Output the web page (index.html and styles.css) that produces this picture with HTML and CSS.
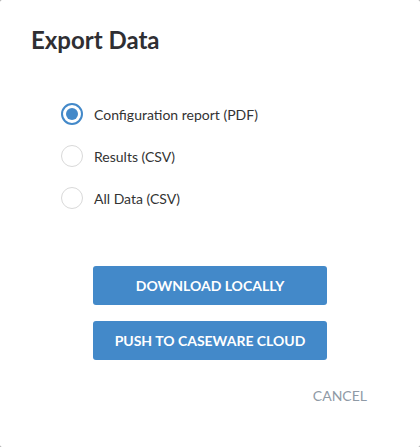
FILE: index.html
```html
<!DOCTYPE html>
<html>
<head>
<meta charset="utf-8">
<link rel="stylesheet" href="styles.css">
</head>
<body>
<div class="dialog">
  <h1 class="title">Export Data</h1>
  <div class="options">
    <label class="option"><span class="radio checked"></span><span class="label">Configuration report (PDF)</span></label>
    <label class="option"><span class="radio"></span><span class="label">Results (CSV)</span></label>
    <label class="option"><span class="radio"></span><span class="label">All Data (CSV)</span></label>
  </div>
  <div class="actions">
    <button class="btn">DOWNLOAD LOCALLY</button>
    <button class="btn">PUSH TO CASEWARE CLOUD</button>
  </div>
  <div class="footer">
    <button class="cancel">CANCEL</button>
  </div>
</div>
</body>
</html>
```
FILE: styles.css
```css
html, body {
  margin: 0;
  padding: 0;
  background: #9a9a9a;
}
.dialog {
  width: 420px;
  height: 447px;
  box-sizing: border-box;
  background: #fff;
  border-radius: 2px;
  font-family: Lato, "Liberation Sans", sans-serif;
  color: #333;
  padding: 24px 0 0 31px;
}
.title {
  margin: 0;
  font-size: 24px;
  font-weight: 700;
  line-height: 32px;
  color: #2f2f33;
}
.options {
  margin-top: 47px;
  padding-left: 30px;
  display: flex;
  flex-direction: column;
  gap: 20px;
}
.option {
  display: flex;
  align-items: center;
  height: 22px;
  gap: 11px;
}
.radio {
  width: 22px;
  height: 22px;
  box-sizing: border-box;
  border: 1px solid #d9d9d9;
  border-radius: 50%;
  display: flex;
  align-items: center;
  justify-content: center;
  background: #fff;
}
.radio.checked {
  border: 2px solid #4389c9;
}
.radio.checked::after {
  content: "";
  width: 12px;
  height: 12px;
  border-radius: 50%;
  background: #4389c9;
}
.label {
  font-size: 14px;
  color: #333;
}
.actions {
  margin-top: 57px;
  padding-left: 62px;
  display: flex;
  flex-direction: column;
  gap: 16px;
}
.btn {
  width: 234px;
  height: 39px;
  border: none;
  border-radius: 3px;
  background: #4389c9;
  color: #fff;
  font-family: Lato, "Liberation Sans", sans-serif;
  font-weight: 700;
  font-size: 14px;
  padding: 0;
}
.footer {
  margin-top: 26px;
  display: flex;
  justify-content: flex-end;
  padding-right: 53px;
}
.cancel {
  border: none;
  background: none;
  padding: 0;
  font-family: Lato, "Liberation Sans", sans-serif;
  font-size: 14px;
  color: #8f9aa6;
  line-height: 20px;
}
```
